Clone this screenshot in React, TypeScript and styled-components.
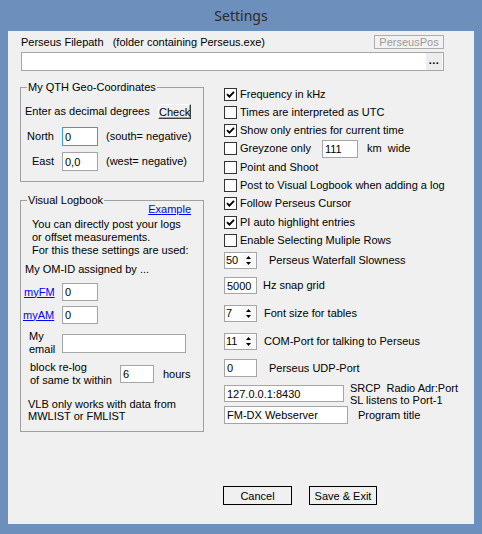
import React from "react";
import styled, { createGlobalStyle } from "styled-components";

const Global = createGlobalStyle`
  html, body { margin: 0; padding: 0; background: #6d8fbc; }
  body { font-family: "Liberation Sans", Arial, sans-serif; font-size: 11px; color: #000; }
  * { box-sizing: border-box; }
`;

const Window = styled.div`
  width: 482px;
  height: 534px;
  background: #6d8fbc;
  display: flex;
  flex-direction: column;
  padding: 0 8px 10px 8px;
`;

const TitleBar = styled.div`
  height: 31px;
  display: flex;
  align-items: center;
  justify-content: center;
  padding-bottom: 1px;
  font-family: "Noto Sans", "Open Sans", sans-serif;
  font-size: 14px;
  color: #2b2b2b;
`;

const Client = styled.div`
  flex: 1;
  background: #f0f0f0;
  display: flex;
  flex-direction: column;
  overflow: hidden;
`;

const TopRow = styled.div`
  display: flex;
  align-items: center;
  justify-content: space-between;
  height: 14px;
  margin: 4px 30px 0 13px;
`;

const Text = styled.span<{ $lh?: number; $pl?: number }>`
  line-height: ${(p) => p.$lh ?? 13}px;
  padding-left: ${(p) => p.$pl ?? 0}px;
  white-space: pre;
`;

const DisabledButton = styled.button`
  width: 70px;
  height: 14px;
  padding: 0;
  border: 1px solid #adadad;
  background: #f2f2f2;
  color: #9a9a9a;
  font: 11px "Liberation Sans", Arial, sans-serif;
  line-height: 12px;
`;

const PathBox = styled.div`
  margin: 3px 30px 0 13px;
  height: 19px;
  border: 1px solid #a5a5a5;
  background: #fff;
  display: flex;
  justify-content: flex-end;
  align-items: center;
  padding: 0 1px;
`;

const Ellipsis = styled.span`
  width: 16px;
  height: 17px;
  background: #ededed;
  font-weight: bold;
  font-size: 11px;
  line-height: 15px;
  text-align: center;
  letter-spacing: 0.5px;
`;

const Columns = styled.div`
  display: grid;
  grid-template-columns: 184px 1fr;
  column-gap: 20px;
  margin: 9px 0 0 12px;
`;

const Column = styled.div`
  display: flex;
  flex-direction: column;
  min-width: 0;
`;

const Group = styled.fieldset<{ $pb: number; $mt?: number }>`
  margin: ${(p) => p.$mt ?? 0}px 0 0 0;
  padding: 0 0 ${(p) => p.$pb}px 0;
  border: 1px solid #a0a0a0;
  min-width: 0;
`;

const Legend = styled.legend`
  padding: 0 1px;
  margin-left: 6px;
  line-height: 14px;
  font-size: 11px;
`;

const EnterRow = styled.div`
  display: flex;
  align-items: center;
  justify-content: space-between;
  height: 15px;
  margin: 10px 12px 0 4px;
`;

const ClassicButton = styled.button`
  width: 33px;
  height: 15px;
  padding: 0;
  background: #f0f0f0;
  border: 1px solid;
  border-color: #fff #404040 #404040 #fff;
  box-shadow: inset -1px -1px 0 #a0a0a0;
  font: 11px "Liberation Sans", Arial, sans-serif;
  line-height: 12px;
  color: #000;
`;

const CoordRow = styled.div<{ $mt: number }>`
  display: grid;
  grid-template-columns: 33px 36px auto;
  column-gap: 8px;
  align-items: center;
  height: 19px;
  margin-top: ${(p) => p.$mt}px;
`;

const RightLabel = styled.span`
  text-align: right;
  line-height: 13px;
`;

const Field = styled.input<{ $w: number; $h: number; $focus?: boolean }>`
  width: ${(p) => p.$w}px;
  height: ${(p) => p.$h}px;
  border: 1px solid ${(p) => (p.$focus ? "#3399ff" : "#a5a5a5")};
  background: #fff;
  padding: 0 2px;
  margin: 0;
  font: 11px "Liberation Sans", Arial, sans-serif;
  color: #000;
  outline: none;
`;

const Link = styled.a<{ $pl?: number }>`
  color: #0000ff;
  text-decoration: underline;
  line-height: 13px;
  padding-left: ${(p) => p.$pl ?? 0}px;
`;

const ExampleRow = styled.div`
  display: flex;
  justify-content: flex-end;
  margin: -4px 12px 0 0;
`;

const Para = styled.div<{ $mt: number; $ml: number; $lh?: number }>`
  margin: ${(p) => p.$mt}px 0 0 ${(p) => p.$ml}px;
  line-height: ${(p) => p.$lh ?? 13}px;
  white-space: pre;
`;

const IdRow = styled.div<{ $mt: number; $h: number }>`
  display: grid;
  grid-template-columns: 41px auto;
  align-items: center;
  height: ${(p) => p.$h}px;
  margin-top: ${(p) => p.$mt}px;
  line-height: 13px;
`;

const BlockRow = styled.div`
  display: flex;
  align-items: center;
  height: 26px;
  margin-top: 5px;
  line-height: 13px;
`;

const BlockLabel = styled.span`
  width: 99px;
  padding-left: 9px;
  white-space: pre;
`;

const Hours = styled.span`
  margin-left: 9px;
`;

const CheckRow = styled.div<{ $h: number; $mt?: number }>`
  display: flex;
  align-items: center;
  height: ${(p) => p.$h}px;
  margin-top: ${(p) => p.$mt ?? 0}px;
  white-space: pre;
`;

const Box = styled.span`
  width: 13px;
  height: 13px;
  border: 1px solid #333;
  background: #fff;
  display: inline-flex;
  align-items: center;
  justify-content: center;
  margin-right: 3px;
  flex: none;
`;

const CheckLabel = styled.span<{ $w?: number }>`
  line-height: 13px;
  ${(p) => (p.$w ? `width: ${p.$w}px;` : "")}
`;

const FieldRow = styled.div<{ $mt: number; $h: number }>`
  display: flex;
  align-items: center;
  height: ${(p) => p.$h}px;
  margin-top: ${(p) => p.$mt}px;
  white-space: pre;
`;

const SideLabel = styled.span<{ $ml: number; $lh?: number }>`
  margin-left: ${(p) => p.$ml}px;
  line-height: ${(p) => p.$lh ?? 13}px;
`;

const Spinner = styled.div`
  width: 33px;
  height: 17px;
  border: 1px solid #a5a5a5;
  background: #fff;
  display: flex;
  align-items: stretch;
`;

const SpinValue = styled.span`
  flex: 1;
  padding-left: 1px;
  line-height: 15px;
`;

const SpinArrows = styled.span`
  width: 13px;
  display: flex;
  flex-direction: column;
  align-items: center;
  justify-content: space-around;
  padding: 1px 0;
  background: #f7f7f7;
  margin: 1px;
`;

const ButtonRow = styled.div`
  display: flex;
  gap: 17px;
  margin: auto 0 19px 215px;
`;

const PushButton = styled.button<{ $w: number }>`
  width: ${(p) => p.$w}px;
  height: 19px;
  padding: 0;
  border: 1px solid #000;
  background: #f0f0f0;
  font: 11px "Liberation Sans", Arial, sans-serif;
  color: #000;
`;

const Check = ({ on }: { on: boolean }) => (
  <Box>
    {on && (
      <svg width="9" height="9" viewBox="0 0 9 9">
        <polyline points="1,4.2 3.4,6.6 8,1.8" fill="none" stroke="#000" strokeWidth="1.9" />
      </svg>
    )}
  </Box>
);

const Spin = ({ v }: { v: string }) => (
  <Spinner>
    <SpinValue>{v}</SpinValue>
    <SpinArrows>
      <svg width="5" height="3" viewBox="0 0 5 3">
        <polygon points="0,3 5,3 2.5,0" fill="#000" />
      </svg>
      <svg width="5" height="3" viewBox="0 0 5 3">
        <polygon points="0,0 5,0 2.5,3" fill="#000" />
      </svg>
    </SpinArrows>
  </Spinner>
);

const checks: [string, boolean, number][] = [
  ["Frequency in kHz", true, 19],
  ["Times are interpreted as UTC", false, 17],
  ["Show only entries for current time", true, 18],
];
const checks2: [string, boolean, number][] = [
  ["Point and Shoot", false, 18],
  ["Post to Visual Logbook when adding a log", false, 18],
  ["Follow Perseus Cursor", true, 19],
  ["PI auto highlight entries", true, 18],
  ["Enable Selecting Muliple Rows", false, 18],
];

export default function App() {
  return (
    <>
      <Global />
      <Window>
        <TitleBar>Settings</TitleBar>
        <Client>
          <TopRow>
            <Text>{"Perseus Filepath   (folder containing Perseus.exe)"}</Text>
            <DisabledButton>PerseusPos</DisabledButton>
          </TopRow>
          <PathBox>
            <Ellipsis>...</Ellipsis>
          </PathBox>
          <Columns>
            <Column>
              <Group $pb={10}>
                <Legend>My QTH Geo-Coordinates</Legend>
                <EnterRow>
                  <Text>Enter as decimal degrees</Text>
                  <ClassicButton>Check</ClassicButton>
                </EnterRow>
                <CoordRow $mt={8}>
                  <RightLabel>North</RightLabel>
                  <Field $w={36} $h={19} $focus defaultValue="0" />
                  <Text>(south= negative)</Text>
                </CoordRow>
                <CoordRow $mt={6}>
                  <RightLabel>East</RightLabel>
                  <Field $w={36} $h={19} defaultValue="0,0" />
                  <Text>(west= negative)</Text>
                </CoordRow>
              </Group>
              <Group $pb={9} $mt={11}>
                <Legend>Visual Logbook</Legend>
                <ExampleRow>
                  <Link>Example</Link>
                </ExampleRow>
                <Para $mt={2} $ml={11}>
                  {"You can directly post your logs\nor offset measurements.\nFor this these settings are used:"}
                </Para>
                <Para $mt={6} $ml={4}>My OM-ID assigned by ...</Para>
                <IdRow $mt={7} $h={18}>
                  <Link $pl={3}>myFM</Link>
                  <Field $w={36} $h={18} defaultValue="0" />
                </IdRow>
                <IdRow $mt={5} $h={18}>
                  <Link $pl={2}>myAM</Link>
                  <Field $w={36} $h={18} defaultValue="0" />
                </IdRow>
                <IdRow $mt={6} $h={26}>
                  <Text $pl={8}>{"My\nemail"}</Text>
                  <Field $w={124} $h={19} defaultValue="" />
                </IdRow>
                <BlockRow>
                  <BlockLabel>{"block re-log\nof same tx within"}</BlockLabel>
                  <Field $w={34} $h={18} defaultValue="6" />
                  <Hours>hours</Hours>
                </BlockRow>
                <Para $mt={11} $ml={7} $lh={12}>
                  {"VLB only works with data from\nMWLIST or FMLIST"}
                </Para>
              </Group>
            </Column>
            <Column>
              {checks.map(([t, on, h], i) => (
                <CheckRow key={t} $h={h} $mt={i === 0 ? 5 : 0}>
                  <Check on={on} />
                  <CheckLabel>{t}</CheckLabel>
                </CheckRow>
              ))}
              <CheckRow $h={19}>
                <Check on={false} />
                <CheckLabel $w={82}>Greyzone only</CheckLabel>
                <Field $w={36} $h={18} defaultValue="111" />
                <SideLabel $ml={9}>{"km  wide"}</SideLabel>
              </CheckRow>
              {checks2.map(([t, on, h]) => (
                <CheckRow key={t} $h={h}>
                  <Check on={on} />
                  <CheckLabel>{t}</CheckLabel>
                </CheckRow>
              ))}
              <FieldRow $mt={3} $h={17}>
                <Spin v="50" />
                <SideLabel $ml={12}>Perseus Waterfall Slowness</SideLabel>
              </FieldRow>
              <FieldRow $mt={8} $h={17}>
                <Field $w={33} $h={17} defaultValue="5000" />
                <SideLabel $ml={6}>Hz snap grid</SideLabel>
              </FieldRow>
              <FieldRow $mt={11} $h={17}>
                <Spin v="7" />
                <SideLabel $ml={7}>Font size for tables</SideLabel>
              </FieldRow>
              <FieldRow $mt={11} $h={17}>
                <Spin v="11" />
                <SideLabel $ml={7}>COM-Port for talking to Perseus</SideLabel>
              </FieldRow>
              <FieldRow $mt={9} $h={18}>
                <Field $w={33} $h={18} defaultValue="0" />
                <SideLabel $ml={12}>Perseus UDP-Port</SideLabel>
              </FieldRow>
              <FieldRow $mt={8} $h={17}>
                <Field $w={120} $h={17} defaultValue="127.0.0.1:8430" />
                <SideLabel $ml={6} $lh={12}>{"SRCP  Radio Adr:Port\nSL listens to Port-1"}</SideLabel>
              </FieldRow>
              <FieldRow $mt={4} $h={18}>
                <Field $w={124} $h={18} defaultValue="FM-DX Webserver" />
                <SideLabel $ml={10}>Program title</SideLabel>
              </FieldRow>
            </Column>
          </Columns>
          <ButtonRow>
            <PushButton $w={69}>Cancel</PushButton>
            <PushButton $w={68}>Save &amp; Exit</PushButton>
          </ButtonRow>
        </Client>
      </Window>
    </>
  );
}
